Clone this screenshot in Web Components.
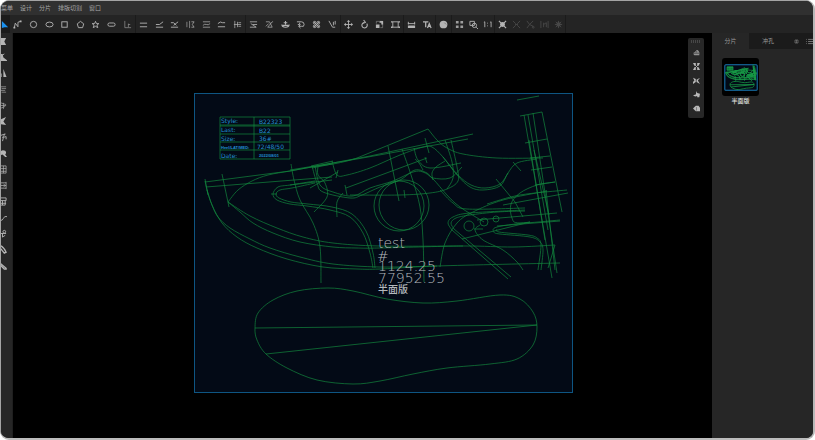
<!DOCTYPE html>
<html lang="zh-CN">
<head>
<meta charset="utf-8">
<title>半面版</title>
<style>
html, body { margin: 0; height: 100%; background: #fff; }
body { font-family: "Liberation Sans", "Noto Sans CJK SC", sans-serif; font-size: 6px; line-height: 8px; color: #aaa; }
</style>
</head>
<body>
<pattern-app></pattern-app>
<script>
const sheet = `
  * { box-sizing: border-box; }
  button { appearance: none; border: 0; margin: 0; padding: 0; background: none; color: inherit; font: inherit; line-height: inherit; display: grid; place-items: center; cursor: pointer; }
  svg { display: block; }
`;
function define(name, html, setup) {
  const t = document.createElement('template');
  t.innerHTML = html;
  customElements.define(name, class extends HTMLElement {
    constructor() {
      super();
      this.attachShadow({ mode: 'open' }).append(t.content.cloneNode(true));
    }
    connectedCallback() { if (setup) setup(this, this.shadowRoot); }
  });
}

/* Glyphs on a 10 x 10 grid. f = filled with the current colour. */
const glyphs = {
  cursor: '<path class="f" d="M1 1L8 8H4L1 9z"/>',
  poly: '<path d="M1.500 8.500L2.500 3.500L5.500 7.500V2.500L8.500 1.500"/><path class="f" d="M.5 7.500h2v2h-2zM7.500.5h2v2h-2z"/>',
  circle: '<circle cx="5" cy="5" r="3.5"/>',
  ellipse: '<ellipse cx="5" cy="5" rx="4" ry="2.7"/>',
  rect: '<rect x="2" y="2" width="6" height="6"/>',
  pentagon: '<path d="M5 1.5L8.6 4.3L7.3 8.5H2.7L1.4 4.3z"/>',
  star: '<path d="M5 1.5L6 4H8.7L6.6 5.7L7.5 8.5L5 7L2.5 8.5L3.4 5.7L1.3 4H4z"/>',
  pill: '<rect x="1" y="3.3" width="8" height="3.6" rx="1.8"/>',
  corner: '<path opacity=".6" d="M2 1V8.5H9M6 4V8M6 5H8"/>',
  lines: '<path d="M1 3.5H9M1 7.5H9"/>',
  trim: '<path d="M1 8H9M1 5H5L9 2"/>',
  trimx: '<path d="M1 3H4L7 6M1 8H9M4 6L9 2"/>',
  mirror: '<path d="M1 2V8M4 1V9" opacity=".7"/><path d="M6 2H9L7 5L9 8H6" opacity=".8"/>',
  offset: '<path d="M1 2H9M1 8H9M1 6Q3 4 5 5T9 4" opacity=".8"/>',
  arcs: '<path d="M1 4Q4 1 6 3H9M1 7.5H9"/>',
  space: '<path d="M2 1V9M5 2V8M6 3H9M6 7H9M1 5H9" opacity=".8"/>',
  cutlist: '<path d="M1 2H9M2 4L8 8M4 5H9M1 8H8" opacity=".9"/>',
  cutcurve: '<path d="M1 2H5L8 8H3L8 2H9M1 7L4 4" opacity=".8"/>',
  flip: '<path d="M1 5Q1 8 5 8T9 5M2 6H8M5 5V1M3 3H7" stroke-width="1.200"/>',
  hook: '<path d="M1 2H6Q9 2 9 5T6 7H3M4 3V5H2M5 5L3 7L5 9"/>',
  knots: '<path d="M2 2L8 8M8 2L2 8"/><circle cx="3" cy="3" r="1.500"/><circle cx="7" cy="7" r="1.500"/><circle cx="7" cy="3" r="1.500"/><circle cx="3" cy="7" r="1.500"/>',
  notch: '<path d="M1 1L5 8H8M6 2V6M8 1V5"/>',
  move: '<path d="M5 1V9M1 5H9"/><path class="f" d="M5 0L7 2H3zM5 10L7 8H3zM0 5L2 3V7zM10 5L8 3V7z"/>',
  rotate: '<path d="M4 3A3 3 0 1 0 7.500 4M4 0L6 2.500L3 4" stroke-width="1.200"/>',
  scale: '<path class="f" d="M1 5H5V9H1zM6 1H9V5H7V3H5V2z"/><path d="M1.5 4V1.5H8.5V8.5H6" opacity=".5"/>',
  frame: '<path d="M2 2H8V8H2z"/><path d="M0 2H2M8 2H10M0 8H2M8 8H10" stroke-width="1.500"/>',
  save: '<path class="f" d="M1 6H9V9H1z"/><path d="M1.5 5V2M8.5 5V2M1 4H9"/>',
  text: '<path d="M0 2H6M3 2V8M5 9L7 4L9 9M6 7H9" stroke-width="1.4"/>',
  disc: '<circle class="f" cx="5" cy="5" r="4.300"/><path d="M6 3L8 5" stroke="#777"/>',
  grid: '<path class="f" d="M1 1H4V4H1zM6 1H9V4H6zM1 6H4V9H1zM6 6H9V9H6z" opacity=".85"/>',
  zoombox: '<path d="M1 1.5H6V6H1z"/><circle cx="6" cy="6" r="2.4"/><path d="M8 8L10 10"/>',
  ratio: '<path d="M1 2.5L2 2V8M8 2.5L9 2V8"/><path class="f" d="M4.5 3h1v1h-1zM4.5 6h1v1h-1z"/>',
  nodes: '<path d="M1 1L9 9M9 1L1 9" stroke-width="1.3"/><circle class="f" cx="5" cy="5" r="2.7"/>',
  cross: '<path d="M1 1L4 4V6L1 9M9 1L6 4V6L9 9M4 5H6"/>',
  crossdot: '<path d="M1 1L4 5L1 9M8 1L4 5L8 7"/><circle cx="8" cy="8" r="1"/>',
  columns: '<path d="M1 1V9M9 1V9M4 3V8M4 5L7 3V8"/>',
  gear: '<circle class="f" cx="5" cy="5" r="2.4"/><path d="M5 1V9M1 5H9M2 2L8 8M8 2L2 8"/>',
  edgeA: '<path class="f" d="M2 1H9L7 5L9 9H2z"/>',
  edgeB: '<path class="f" d="M2 1H5L6 5L10 8V9H2z"/><path d="M4 3L7 1"/>',
  edgeC: '<path class="f" d="M2 3L9 0L6 5L9 9L2 8z"/>',
  peak: '<path class="f" d="M6 0L9.500 9H6z"/><path d="M3 9V5" stroke-width="2"/>',
  bars: '<path d="M2 2H9M4 4H9M2 6H8M4 8H9" opacity=".7"/>',
  fan: '<path d="M3 2L9 4M2 5H9M3 8L8 6M6 2V9" opacity=".7"/>',
  twig: '<path d="M2 3L8 1L5 5L9 4V7M6 5L5 9"/>',
  leaf: '<path class="f" d="M2 4Q4 0 8 2Q10 4 8 6L10 9H8L5 6L2 7z"/>',
  film: '<path d="M3 1H9V9H3M3 4H9M3 7H9M6 1V9" opacity=".8"/>',
  cells: '<path d="M3 2V8M3 5H9M9 1V9M6 3L8 5L6 7M3 2H9M3 8H9" opacity=".8"/>',
  stack: '<path d="M2 1H9V4H3M5 4V9M2 7H9M8 4V9H2"/>',
  wave: '<path d="M2 8Q5 9 6 6T10 4"/>',
  link: '<circle cx="7" cy="3" r="1.500"/><path d="M2 5H9M5 5V9L8 7"/>',
  pen: '<path d="M3 1Q6 2 9 8L7 9L3 4" stroke-width="1.500"/>',
  brush: '<path d="M3 3L9 8V9H7L3 5" stroke-width="1.500"/>',
  cloud: '<path class="f" d="M1 5Q3 5 4 3Q6 0 8 3Q10 5 9 9H2Q0 8 1 5z" opacity=".75"/><path d="M1 6H9M4 4H6" stroke="#333"/>',
  shrink: '<path class="f" d="M0 0H4V4H2zM10 0H6V4H8zM0 10H4V6H2zM10 10H6V6H8z"/><path d="M2 2L8 8M8 2L2 8"/>',
  merge: '<path class="f" d="M0 1L4 3V7L0 10V7L2 5zM10 1L5 4V7L10 10L7 5z"/>',
  bird: '<path class="f" d="M5 0L6 3L10 4L9 9H6V7L3 8L0 6L4 5z"/>',
  hand: '<path class="f" d="M0 5L4 1H8L10 4V9H4z"/><path d="M5 3V8" stroke="#666"/>',
  pause: '<path d="M2 2H8V8H2zM5 2V8"/>',
  list: '<path d="M0 2H1M0 5H1M0 8H1M3 2H10M3 5H10M3 8H10"/>'
};
define('tool-icon', `<style>${sheet}
  :host { display: block; width: 9px; height: 9px; }
  svg { width: 100%; height: 100%; fill: none; stroke: currentColor; stroke-width: 1; overflow: visible; }
  .f { fill: currentColor; stroke: none; }
</style><svg viewBox="0 0 10 10" aria-hidden="true"></svg>`,
(el, root) => { root.querySelector('svg').innerHTML = glyphs[el.getAttribute('name')] || ''; });

const toolButton = n => `<button type="button" aria-label="${n}"><tool-icon name="${n}"></tool-icon></button>`;

define('menu-bar', `<style>${sheet}
  :host { display: flex; gap: 7px; align-items: center; height: 14px; background: #303030; color: #a6a6a6; }
</style>
<button type="button">菜单</button><button type="button">设计</button><button type="button">分片</button><button type="button">排版切割</button><button type="button">窗口</button>`);

define('tool-group', `<style>${sheet}
  :host { display: flex; height: 18px; border-right: 1px solid #1b1b1b; color: #b4b4b4; }
  :host([muted]) button ~ button { color: #484848; }
  :host([active]) { color: #1b91ee; background: #1b1b1b; }
  button { flex: 1; min-width: 0; }
</style>`, (el, root) => {
  root.querySelectorAll('button').forEach(b => b.remove());
  root.append(...el.getAttribute('tools').split(' ').map(n => {
    const d = document.createElement('div'); d.innerHTML = toolButton(n); return d.firstChild;
  }));
});

define('tool-bar', `<style>${sheet}
  :host { display: flex; align-items: center; height: 18px; background: #242424; overflow: hidden; }
  tool-group { flex: none; }
</style>
<tool-group active tools="cursor" style="width:9px"></tool-group>
<tool-group tools="poly circle ellipse rect pentagon star pill corner" style="width:126px"></tool-group>
<tool-group tools="lines trim trimx mirror offset arcs space" style="width:110px"></tool-group>
<tool-group tools="cutlist cutcurve flip hook knots notch" style="width:95px"></tool-group>
<tool-group tools="move rotate scale frame" style="width:63px"></tool-group>
<tool-group tools="save text" style="width:32px"></tool-group>
<tool-group tools="disc" style="width:16px"></tool-group>
<tool-group tools="grid zoombox ratio" style="width:43px"></tool-group>
<tool-group muted tools="nodes cross crossdot columns gear" style="width:71px"></tool-group>`);

define('side-bar', `<style>${sheet}
  :host { display: grid; grid-auto-rows: 16px; align-content: start; width: 12px; overflow: hidden; background: #262626; color: #b5b5b5; border-right: 1px solid #1f1f1f; }
  button { width: 6px; justify-content: end; }
</style>` + 'edgeA edgeB peak bars fan edgeC twig leaf film cells stack wave link pen brush'.split(' ').map(toolButton).join(''));

/* Smooth curves through the listed points; a leading Z closes the curve, a leading L makes straight segments. */
const strokes = [
  'Z255,328 258,313 273,300 297,291 328,288 353,291 387,299 423,303 457,301 500,295 520,299 533,312 537,327 533,345 517,359 490,364 447,368 413,374 380,381 353,384 317,380 287,368 266,354 257,340',
  'L255,328 537,325', 'L266,354 537,325',
  '205,181 207,190 212,205 222,223 237,237 257,248 287,259 323,267 357,269 380,269 437,266 560,263',
  '207,190 212,205 218,217 230,228 250,239 270,248 300,257 333,264 380,267 437,266',
  '228,202 240,212 253,223 273,233 300,242 333,247 357,248 380,248 463,246 513,247 555,245',
  '228,202 250,216 277,228 303,237 333,243 380,246 463,246',
  '228,202 238,190 252,181 268,175 290,171 312,167 333,164 347,161 357,158',
  'L357,158 428,129',
  '428,129 437,140 447,148 463,154 497,158 543,158',
  'L205,182 290,171 370,156 473,134', 'L290,170 357,159 468,139', 'L206,187 332,177', 'L290,185 332,180',
  'L311,166 333,161', 'L312,168 332,164',
  'L205,179 208,195', 'L222,174 229,207',
  '291,164 294,180 300,200 313,223 320,247 321,283',
  '315,181 290,185 278,187 273,194 277,200 290,204 307,206 330,210 350,217 363,233 370,253 373,268',
  '315,183 292,188 280,190 276,194 279,198 291,202 308,204 332,207 352,214 366,231 373,253 375,268',
  'L271,194 277,194',
  '312,166 317,183 323,192 350,198 362,195 380,187 400,180 415,170 427,173 433,178 450,178 462,167',
  '315,166 320,185 333,192 353,196 370,188 393,181 413,172 423,172 433,179 447,195 460,207 484,222',
  '318,166 318,175 325,183 327,197 314,212',
  '332,161 337,175 347,175 370,168 400,155 423,147 432,147 443,157 457,175 470,187 483,190 500,186 508,173 517,163 537,159',
  '443,157 458,175 471,185 485,188 500,184 508,173', 'L310,188 338,172', 'L338,170 336,178',
  'L345,185 347,195', 'L346,188 427,158', 'L425,157 427,163',
  'L388,146 399,201', '402,149 412,178 420,207 423,240 424,282', 'L404,190 405,198',
  '350,195 400,195 430,193 447,189 458,181 457,167 451,140', '445,140 452,162 453,178 447,189',
  '414,148 418,160 430,168 461,163', 'L425,138 429,153', '433,180 432,173 436,167 445,161', '415,159 419,163 423,170',
  '343,193 337,202 337,217',
  'L517,100 539,96', 'L520,116 542,112', 'L524,115 552,278', 'L528,115 548,230', 'L533,113 557,273', 'L542,112 562,212',
  'L529,140 545,240', 'L534,150 549,215', 'L546,190 555,270',
  'L525,143 547,139', 'L530,158 550,156', 'L531,170 552,167', 'L535,185 555,182',
  '487,204 520,195 567,190', 'L503,205 568,193', 'L496,179 515,202 523,217', 'L513,162 521,171',
  '555,182 537,185 520,193 511,204 512,218 520,223 560,220',
  '440,190 453,203 467,209 525,208',
  '525,210 470,213 453,217 448,223 452,230', 'L452,230 508,279',
  '525,211 497,212 470,215 456,218 451,223 454,229', 'L454,229 511,277',
  '440,267 445,243 457,223 473,212 503,200 547,191',
  'L462,239 530,222', 'L477,220 557,213', 'L474,229 483,229', 'L497,226 560,221',
  '480,225 475,230 483,240 503,250 517,262 523,270',
  '530,222 497,227 494,232 500,234 530,237 540,242 543,250 541,270',
  '497,229 499,232 528,235 537,238 541,245 538,270', 'L548,268 555,245'
];
function trace(s) {
  const kind = s[0], pts = s.replace(/^[ZL]/, '').split(' ').map(p => p.split(',').map(Number));
  if (kind === 'L') return 'M' + pts.join('L');
  const n = pts.length, closed = kind === 'Z';
  const at = i => closed ? pts[(i + n) % n] : pts[Math.max(0, Math.min(n - 1, i))];
  let d = 'M' + pts[0];
  for (let i = 0; i < (closed ? n : n - 1); i++) {
    const [a, b, c, e] = [at(i - 1), at(i), at(i + 1), at(i + 2)];
    d += `C${b[0] + (c[0] - a[0]) / 6},${b[1] + (c[1] - a[1]) / 6} ${c[0] - (e[0] - b[0]) / 6},${c[1] - (e[1] - b[1]) / 6} ${c}`;
  }
  return d + (closed ? 'Z' : '');
}
const outline = strokes.map(s => `<path d="${trace(s)}"/>`).join('') +
  '<circle cx="399" cy="206" r="25"/><circle cx="404" cy="205" r="25"/><circle cx="469" cy="226" r="5"/><circle cx="484" cy="222" r="4"/><circle cx="496" cy="219" r="3"/>' +
  '<path d="M220 117H290V159H220zM254 117V159M220 125H290M220 126H290M220 134H290M220 142H290M220 150H290"/>';

define('pattern-canvas', `<style>${sheet}
  :host { display: block; position: relative; min-width: 0; background: #000; overflow: hidden; }
  svg { width: 100%; height: 100%; }
  .lines { fill: none; stroke: #13873e; stroke-width: .7; }
  .info { fill: #2290d0; font: 6px "DejaVu Sans", sans-serif; }
  .info .s { font: bold 4px "Liberation Sans", sans-serif; }
  .note { fill: #b4b8bd; font: 200 14px "DejaVu Sans", sans-serif; }
  .note .c { font: 500 10px "Noto Sans CJK SC", sans-serif; }
</style>
<svg viewBox="13 33 699 405">
  <rect x="194.500" y="93.500" width="378" height="299" fill="#030a16" stroke="#0e5582"/>
  <g class="lines">${outline}</g>
  <g class="info">
    <text x="221" y="123">Style:</text><text x="259" y="124">B22323</text>
    <text x="221" y="132">Last:</text><text x="259" y="133">B22</text>
    <text x="221" y="141">Size:</text><text x="259" y="141">36#</text>
    <text class="s" x="221" y="149">Heel/LAT/MED:</text><text x="257" y="149">72/48/50</text>
    <text x="221" y="158">Date:</text><text class="s" x="259" y="157">2022/08/01</text>
  </g>
  <g class="note">
    <text x="378" y="248">test</text><text x="377" y="261">#</text><text x="378" y="271">1124.25</text><text x="378" y="283">77952.55</text><text class="c" x="378" y="293">半面版</text>
  </g>
</svg><slot></slot>`);

define('float-palette', `<style>${sheet}
  :host { position: absolute; top: 5px; right: 8px; width: 16px; padding: 2px 0 3px; border-radius: 2px; background: #272727; color: #b8b8b8; }
  .grip { height: 3px; margin: 0 3px 2px; background: repeating-linear-gradient(90deg, #484848 0 1px, transparent 1px 2px); }
  button { width: 100%; height: 14px; }
  tool-icon { width: 7px; height: 7px; }
</style><div class="grip"></div>` + 'cloud shrink merge bird hand'.split(' ').map(toolButton).join(''));

define('piece-card', `<style>${sheet}
  :host { display: grid; justify-items: center; row-gap: 1px; width: 37px; color: #e0e0e0; font-weight: 500; }
  .thumb { width: 37px; height: 38px; border-radius: 3px; background: #000; display: grid; place-items: center; }
  svg { width: 34px; height: 27px; }
  .lines { fill: none; stroke: #179a46; stroke-width: 9; }
</style>
<button class="thumb" type="button" aria-label="半面版"><svg viewBox="186 85 395 316"><rect x="194" y="93" width="379" height="300" rx="12" fill="#030a16" stroke="#1878b4" stroke-width="12"/><g class="lines">${outline}</g></svg></button>
<span><slot></slot></span>`);

define('piece-panel', `<style>${sheet}
  :host { display: block; background: #262626; overflow: hidden; }
  .tabs { display: grid; grid-template-columns: 37px 38px 1fr 8px; height: 16px; background: #1b1b1b; color: #999; align-items: center; overflow: hidden; }
  .tabs button { height: 16px; }
  .tabs .on { background: #262626; }
  .tabs tool-icon { width: 5px; height: 5px; }
  .tabs button:last-child tool-icon { width: 7px; height: 7px; }
  .pieces { display: flex; flex-wrap: wrap; gap: 8px; padding: 9px 10px; }
</style>
<div class="tabs"><button class="on" type="button">分片</button><button type="button">冲孔</button><button type="button" aria-label="columns"><tool-icon name="pause"></tool-icon></button><button type="button" aria-label="list"><tool-icon name="list"></tool-icon></button></div>
<div class="pieces"><piece-card>半面版</piece-card></div>`);

define('pattern-app', `<style>${sheet}
  :host { display: grid; grid-template: auto auto minmax(0, 1fr) / auto minmax(0, 1fr) 101px; height: 100vh; box-sizing: border-box; border: 1px solid #a4a4a4; border-right: 2px solid #b8b8b8; border-bottom: 2px solid #bcbcbc; border-radius: 9px; overflow: hidden; background: #262626; }
  menu-bar, tool-bar { grid-column: 1 / -1; }
</style>
<menu-bar></menu-bar><tool-bar></tool-bar>
<side-bar></side-bar><pattern-canvas><float-palette></float-palette></pattern-canvas><piece-panel></piece-panel>`);
</script>
</body>
</html>
